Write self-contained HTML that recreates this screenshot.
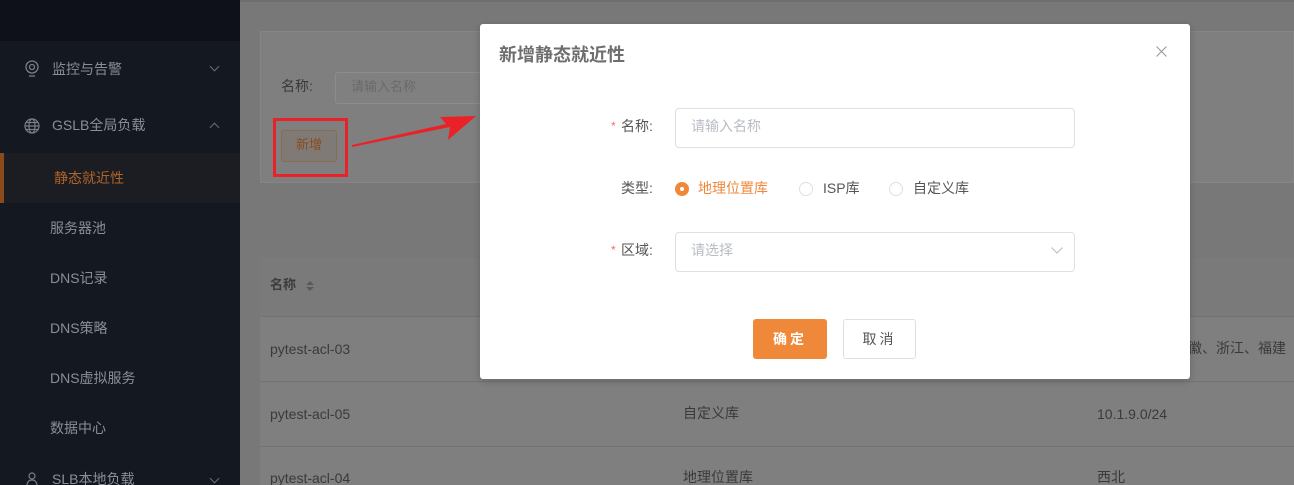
<!DOCTYPE html>
<html><head><meta charset="utf-8"><style>
*{margin:0;padding:0;box-sizing:border-box}
html{overflow:hidden;width:1294px;height:485px}
body{width:1294px;height:485px;overflow:hidden;position:relative;background:#787878;font-family:"Liberation Sans","Noto Sans CJK SC",sans-serif;font-size:14px;line-height:1.2}
.abs{position:absolute}
.side{left:0;top:0;width:240px;height:485px;background:#141821;overflow:hidden}
.side .top{left:0;top:0;width:240px;height:41px;background:#0e1119}
.mi{position:absolute;left:0;width:240px;color:#8a8e96;font-size:14px}
.chev{position:absolute;right:22px;width:7px;height:7px;border-right:1px solid #6a6e76;border-bottom:1px solid #6a6e76}
.txt{color:#3a3a3a}
</style></head><body>
<div class="abs side">
 <div class="abs top"></div>
 <div class="mi" style="top:61px;left:52px;width:auto">监控与告警</div>
 <svg class="abs" style="left:24px;top:60px" width="16" height="18" viewBox="0 0 16 18"><circle cx="8" cy="7" r="6" fill="none" stroke="#7a7e86" stroke-width="1.3"/><circle cx="8" cy="7" r="2.5" fill="none" stroke="#7a7e86" stroke-width="1.3"/><path d="M5 16h6" stroke="#7a7e86" stroke-width="1.3"/></svg>
 <div class="chev" style="top:63px;transform:rotate(45deg)"></div>
 <div class="mi" style="top:117px;left:52px;width:auto">GSLB全局负载</div>
 <svg class="abs" style="left:24px;top:118px" width="16" height="16" viewBox="0 0 16 16" fill="none" stroke="#7a7e86" stroke-width="1.2"><circle cx="8" cy="8" r="7"/><ellipse cx="8" cy="8" rx="3" ry="7"/><path d="M1 8h14M2 4.5h12M2 11.5h12"/></svg>
 <div class="chev" style="top:124px;transform:rotate(-135deg)"></div>
 <div class="abs" style="left:0;top:153px;width:240px;height:50px;background:#1c1d22"></div>
 <div class="abs" style="left:0;top:153px;width:4px;height:50px;background:#8a4a1a"></div>
 <div class="mi" style="top:170px;left:54px;color:#b0642a">静态就近性</div>
 <div class="mi" style="top:220px;left:50px">服务器池</div>
 <div class="mi" style="top:270px;left:50px">DNS记录</div>
 <div class="mi" style="top:320px;left:50px">DNS策略</div>
 <div class="mi" style="top:370px;left:50px">DNS虚拟服务</div>
 <div class="mi" style="top:420px;left:50px">数据中心</div>
 <div class="mi" style="top:471px;left:52px">SLB本地负载</div>
 <svg class="abs" style="left:25px;top:472px" width="14" height="14" viewBox="0 0 14 14" fill="none" stroke="#7a7e86" stroke-width="1.2"><circle cx="7" cy="4" r="3"/><path d="M2 14c0-4 2-6 5-6s5 2 5 6"/></svg>
 <div class="chev" style="top:475px;transform:rotate(45deg)"></div>
</div>
<div class="abs" style="left:240px;top:0;width:1054px;height:2px;background:#6e6e6e"></div>
<div class="abs" style="left:260px;top:31px;width:1034px;height:152px;background:#7f7f7f;border:1px solid #858585"></div>
<div class="abs txt" style="left:281px;top:78px">名称:</div>
<div class="abs" style="left:335px;top:72px;width:150px;height:32px;border:1px solid #8c8c8c;border-radius:3px;background:#808080"></div>
<div class="abs" style="left:351px;top:79px;color:#6a6a6a;font-size:13px">请输入名称</div>
<div class="abs" style="left:281px;top:130px;width:56px;height:32px;border:1px solid #8a6a50;border-radius:3px;background:#807a76"></div>
<div class="abs" style="left:296px;top:137px;color:#8a4c1c;font-size:13px">新增</div>
<div class="abs" style="left:273px;top:118px;width:75px;height:59px;border:3px solid #e82228"></div>
<svg class="abs" style="left:350px;top:110px" width="130" height="42" viewBox="0 0 130 42"><path d="M2 37 L100 17 L98 30 L126 6 L90 7 L96 14 L2 35Z" fill="#ea2228"/></svg>
<div class="abs" style="left:260px;top:258px;width:1034px;height:58px;background:#7a7a7a"></div>
<div class="abs" style="left:270px;top:277px;color:#3c3c3c;font-weight:bold;font-size:13px">名称</div>
<svg class="abs" style="left:305px;top:280px" width="10" height="12"><path d="M1 5L5 1L9 5Z M1 7L5 11L9 7Z" fill="#5a5a5a"/></svg>
<div class="abs" style="left:260px;top:316px;width:1034px;height:169px;background:#7f7f7f"></div>
<div class="abs" style="left:260px;top:316px;width:1034px;height:1px;background:#737373"></div>
<div class="abs" style="left:260px;top:381px;width:1034px;height:1px;background:#737373"></div>
<div class="abs" style="left:260px;top:446px;width:1034px;height:1px;background:#737373"></div>
<div class="abs txt" style="left:270px;top:341px">pytest-acl-03</div>
<div class="abs txt" style="left:270px;top:406px">pytest-acl-05</div>
<div class="abs txt" style="left:270px;top:470px">pytest-acl-04</div>
<div class="abs txt" style="left:683px;top:405px">自定义库</div>
<div class="abs txt" style="left:683px;top:469px">地理位置库</div>
<div class="abs txt" style="left:1174px;top:340px;white-space:nowrap">安徽、浙江、福建</div>
<div class="abs txt" style="left:1097px;top:406px">10.1.9.0/24</div>
<div class="abs txt" style="left:1097px;top:469px">西北</div>
<!-- modal -->
<div class="abs" style="left:480px;top:24px;width:710px;height:355px;background:#fff;border-radius:3px;box-shadow:0 2px 8px rgba(0,0,0,.2)"></div>
<div class="abs" style="left:499px;top:45px;font-size:18px;font-weight:bold;color:#6e6e6e">新增静态就近性</div>
<svg class="abs" style="left:1156px;top:46px" width="11" height="11"><path d="M0.5 0.5L10.5 10.5M10.5 0.5L0.5 10.5" stroke="#999" stroke-width="1.1"/></svg>
<div class="abs" style="left:611px;top:119px;color:#f56c6c;font-size:12px">*</div>
<div class="abs" style="left:621px;top:118px;color:#555">名称:</div>
<div class="abs" style="left:675px;top:108px;width:400px;height:40px;border:1px solid #dcdfe6;border-radius:4px"></div>
<div class="abs" style="left:691px;top:118px;color:#b8bcc4">请输入名称</div>
<div class="abs" style="left:621px;top:180px;color:#555">类型:</div>
<div class="abs" style="left:675px;top:182px;width:14px;height:14px;border-radius:50%;background:#f0883a"></div>
<div class="abs" style="left:680px;top:187px;width:4px;height:4px;border-radius:50%;background:#fff"></div>
<div class="abs" style="left:698px;top:180px;color:#f0883a">地理位置库</div>
<div class="abs" style="left:799px;top:182px;width:14px;height:14px;border-radius:50%;border:1px solid #dcdfe6"></div>
<div class="abs" style="left:823px;top:180px;color:#555">ISP库</div>
<div class="abs" style="left:889px;top:182px;width:14px;height:14px;border-radius:50%;border:1px solid #dcdfe6"></div>
<div class="abs" style="left:913px;top:180px;color:#555">自定义库</div>
<div class="abs" style="left:611px;top:243px;color:#f56c6c;font-size:12px">*</div>
<div class="abs" style="left:621px;top:242px;color:#555">区域:</div>
<div class="abs" style="left:675px;top:232px;width:400px;height:40px;border:1px solid #dcdfe6;border-radius:4px"></div>
<div class="abs" style="left:691px;top:242px;color:#b8bcc4">请选择</div>
<svg class="abs" style="left:1051px;top:247px" width="12" height="8"><path d="M0.5 0.5L6 6L11.5 0.5" fill="none" stroke="#bbb"/></svg>
<div class="abs" style="left:753px;top:319px;width:74px;height:40px;background:#f0883a;border-radius:3px;color:#fff;text-align:center;line-height:40px;font-weight:bold;letter-spacing:3px">确定</div>
<div class="abs" style="left:843px;top:319px;width:73px;height:40px;border:1px solid #dcdfe6;border-radius:3px;color:#555;text-align:center;line-height:38px;letter-spacing:3px">取消</div>
</body></html>
